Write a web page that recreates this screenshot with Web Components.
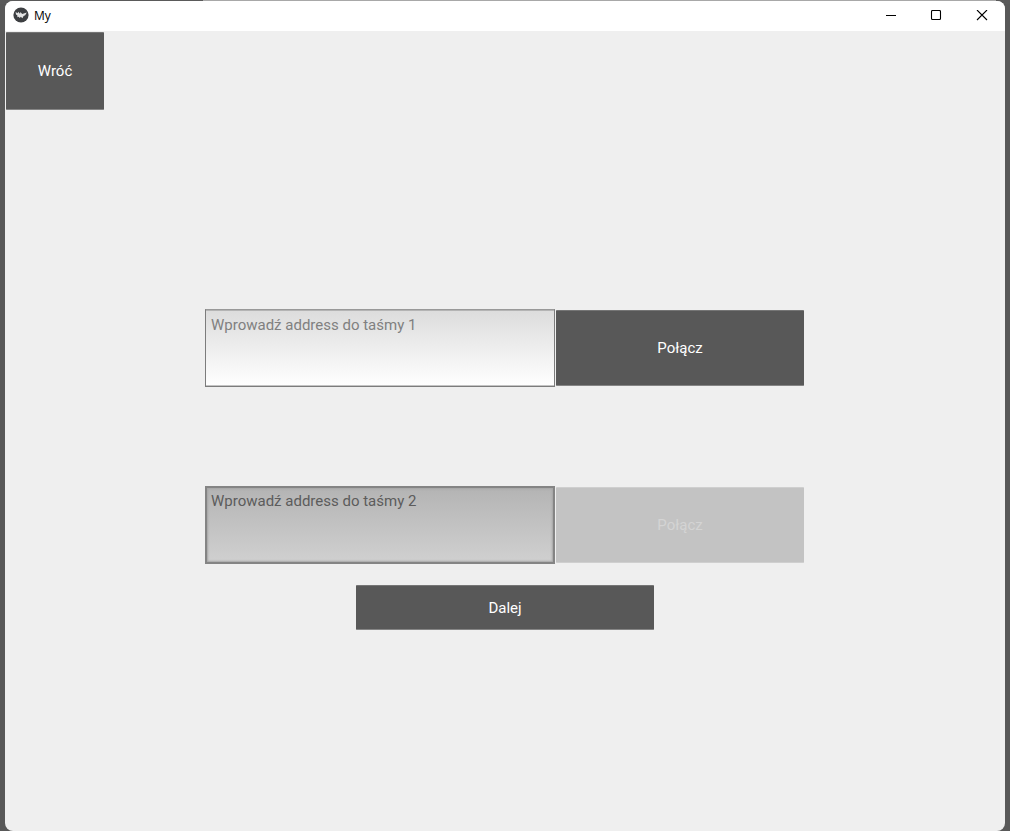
<!DOCTYPE html>
<html lang="pl">
<head>
<meta charset="utf-8">
<meta name="viewport" content="width=device-width, initial-scale=1">
<title>My</title>
<style>
  html, body { margin: 0; }
  body {
    box-sizing: border-box;
    min-height: 100vh;
    padding: 1px 5px 0;
    display: flex;
    background:
      linear-gradient(90deg, #5a5a5a 203px, #a8a8a8 203px calc(100% - 14px), #5a5a5a calc(100% - 14px)) top / 100% 4px no-repeat,
      #585858;
    font-family: Roboto, "Noto Sans", sans-serif;
    font-size: 15px;
  }
</style>
</head>
<body>
<app-window>
  <title-bar slot="title">My</title-bar>
  <push-button class="back" slot="back">Wróć</push-button>
  <tape-row hint="Wprowadź address do taśmy 1">Połącz</tape-row>
  <tape-row hint="Wprowadź address do taśmy 2" disabled>Połącz</tape-row>
  <push-button slot="next">Dalej</push-button>
</app-window>

<template id="app-window">
  <style>
    :host {
      flex: 1;
      display: flex;
      flex-direction: column;
      overflow: hidden;
      border-radius: 8px;
      background: #efefef;
    }
    main { flex: 1; display: flex; flex-direction: column; }
    .back { width: 10%; height: 80px; }
    .rows { display: grid; gap: 99px; width: 60%; margin: 198px auto 0; }
    .next { width: 30%; height: 47px; margin: 20px auto 0; }
  </style>
  <slot name="title"></slot>
  <main>
    <div class="back"><slot name="back"></slot></div>
    <div class="rows"><slot></slot></div>
    <div class="next"><slot name="next"></slot></div>
  </main>
</template>

<template id="title-bar">
  <style>
    :host {
      display: flex;
      align-items: center;
      height: 30px;
      background: #fff;
      color: #000;
      font: 12px/16px "Open Sans", "Noto Sans", sans-serif;
    }
    .logo { width: 16px; height: 16px; margin: 0 5px 2px 8px; }
    .name { flex: 1; }
    button {
      display: grid;
      place-items: center;
      width: 46px;
      height: 30px;
      padding: 0;
      border: 0;
      background: none;
      color: #000;
    }
    button svg { width: 12px; height: 12px; fill: none; stroke: currentColor; }
  </style>
  <svg class="logo" viewBox="0 0 16 16" aria-hidden="true">
    <circle cx="8" cy="8" r="7.6" fill="#3d3f42"/>
    <path fill="#e4e4e4" d="M2.6 5 4.6 6.2 5.2 4.8 7 6.8 7.4 5 9.2 7 13.8 5.4 12.2 8.2 10.6 9 9.4 11.2 7.8 9.8 6.8 11 5.6 9.8 4.4 10.2 4.4 8.6 3 7.4z"/>
  </svg>
  <span class="name"><slot></slot></span>
  <button type="button" aria-label="Minimalizuj"><svg viewBox="0 1 12 12"><path d="M2 6.5h10"/></svg></button>
  <button type="button" aria-label="Maksymalizuj"><svg viewBox="0 1 12 12"><rect x="1.5" y="1.5" width="9" height="9" rx="1" stroke-width="1.1"/></svg></button>
  <button type="button" aria-label="Zamknij"><svg viewBox="0 1 12 12"><path d="m1 1 10 10M11 1 1 11" stroke-width="1.1"/></svg></button>
</template>

<template id="push-button">
  <style>
    :host { display: flex; box-sizing: border-box; height: 100%; padding: 1px; }
    button {
      flex: 1;
      padding: 0;
      border: 0;
      border-top: 1px solid #757575;
      border-bottom: 1px solid #858585;
      border-radius: 1px;
      background: #585858;
      color: #fff;
      font: inherit;
    }
    button:disabled { background: #c3c3c3; border-color: #cfcfcf; color: #d4d4d4; }
  </style>
  <button type="button"><slot></slot></button>
</template>

<template id="tape-row">
  <style>
    :host { display: grid; grid-template-columns: 7fr 5fr; height: 78px; }
    textarea {
      box-sizing: border-box;
      width: 100%;
      height: 100%;
      margin: 0;
      padding: 6px 5px;
      resize: none;
      outline: 0;
      border: 1px solid #7c7c7c;
      border-top-color: #999;
      border-radius: 0;
      background: linear-gradient(#dcdcdc, #fff);
      box-shadow: inset 0 1px #b4b4b4, inset 0 -1px #c4c4c4;
      color: #222;
      font: inherit;
      line-height: 18px;
    }
    textarea::placeholder { color: #808080; opacity: 1; }
    textarea:disabled {
      padding: 4px;
      border: 2px solid #848484;
      background: linear-gradient(#b4b4b4, #d0d0d0);
      box-shadow: inset 0 0 2px 1px #a4a4a4;
    }
    textarea:disabled::placeholder { color: #5c5c5c; }
  </style>
  <textarea></textarea>
  <push-button><slot></slot></push-button>
</template>

<script>
  class TemplateElement extends HTMLElement {
    constructor() {
      super();
      const template = document.getElementById(this.localName);
      this.attachShadow({ mode: "open" }).append(template.content.cloneNode(true));
    }
  }

  class AppWindow extends TemplateElement {}
  class TitleBar extends TemplateElement {}

  class PushButton extends TemplateElement {
    static observedAttributes = ["disabled"];
    attributeChangedCallback() {
      this.shadowRoot.querySelector("button").disabled = this.hasAttribute("disabled");
    }
  }

  class TapeRow extends TemplateElement {
    connectedCallback() {
      const field = this.shadowRoot.querySelector("textarea");
      const off = this.hasAttribute("disabled");
      field.placeholder = this.getAttribute("hint");
      field.setAttribute("aria-label", field.placeholder);
      field.disabled = off;
      this.shadowRoot.querySelector("push-button").toggleAttribute("disabled", off);
    }
  }

  customElements.define("push-button", PushButton);
  customElements.define("title-bar", TitleBar);
  customElements.define("tape-row", TapeRow);
  customElements.define("app-window", AppWindow);
</script>
</body>
</html>
